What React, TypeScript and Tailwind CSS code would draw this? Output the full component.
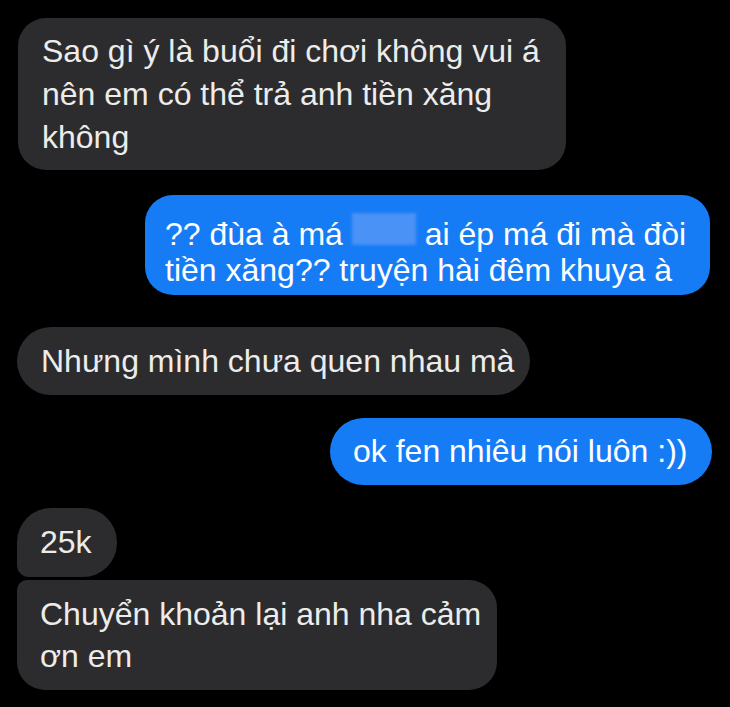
const font = { fontFamily: '"Liberation Sans", Arial, sans-serif' };

export default function App() {
  return (
    <div className="w-[730px] h-[707px] bg-black overflow-hidden" style={font}>
      <div className="flex flex-col pl-[17px] pr-[18px] text-[32px] text-[#ececec] whitespace-nowrap">
        <div className="mt-[18px] ml-[1px] w-[548px] rounded-[28px] bg-[#2c2c2e] px-[24px] pt-[12px] pb-[11px] leading-[43px]">
          Sao gì ý là buổi đi chơi không vui á
          <br />
          nên em có thể trả anh tiền xăng
          <br />
          không
        </div>

        <div className="mt-[25px] mr-[2px] self-end w-[565px] rounded-[28px] bg-[#167cf6] px-[20px] pt-[21px] pb-[7px] leading-[36px] text-white">
          ?? đùa à má{" "}
          <span className="inline-block w-[64px] h-[32px] -mt-[3px] bg-[#4a92f5] blur-[1.5px]" />{" "}
          ai ép má đi mà đòi
          <br />
          tiền xăng?? truyện hài đêm khuya à
        </div>

        <div className="mt-[32px] self-start w-[513px] h-[68px] rounded-full bg-[#2c2c2e] px-[24px] leading-[68px]">
          Nhưng mình chưa quen nhau mà
        </div>

        <div className="mt-[23px] self-end w-[382px] h-[67px] rounded-full bg-[#167cf6] px-[23px] leading-[67px] text-white">
          ok fen nhiêu nói luôn :))
        </div>

        <div className="mt-[23px] self-start w-[100px] h-[69px] rounded-[34px] rounded-bl-[12px] bg-[#2c2c2e] px-[23px] leading-[69px]">
          25k
        </div>

        <div className="mt-[3px] w-[480px] rounded-[28px] rounded-tl-[10px] bg-[#2c2c2e] px-[23px] pt-[13px] pb-[13px] leading-[42px]">
          Chuyển khoản lại anh nha cảm
          <br />
          ơn em
        </div>
      </div>
    </div>
  );
}
